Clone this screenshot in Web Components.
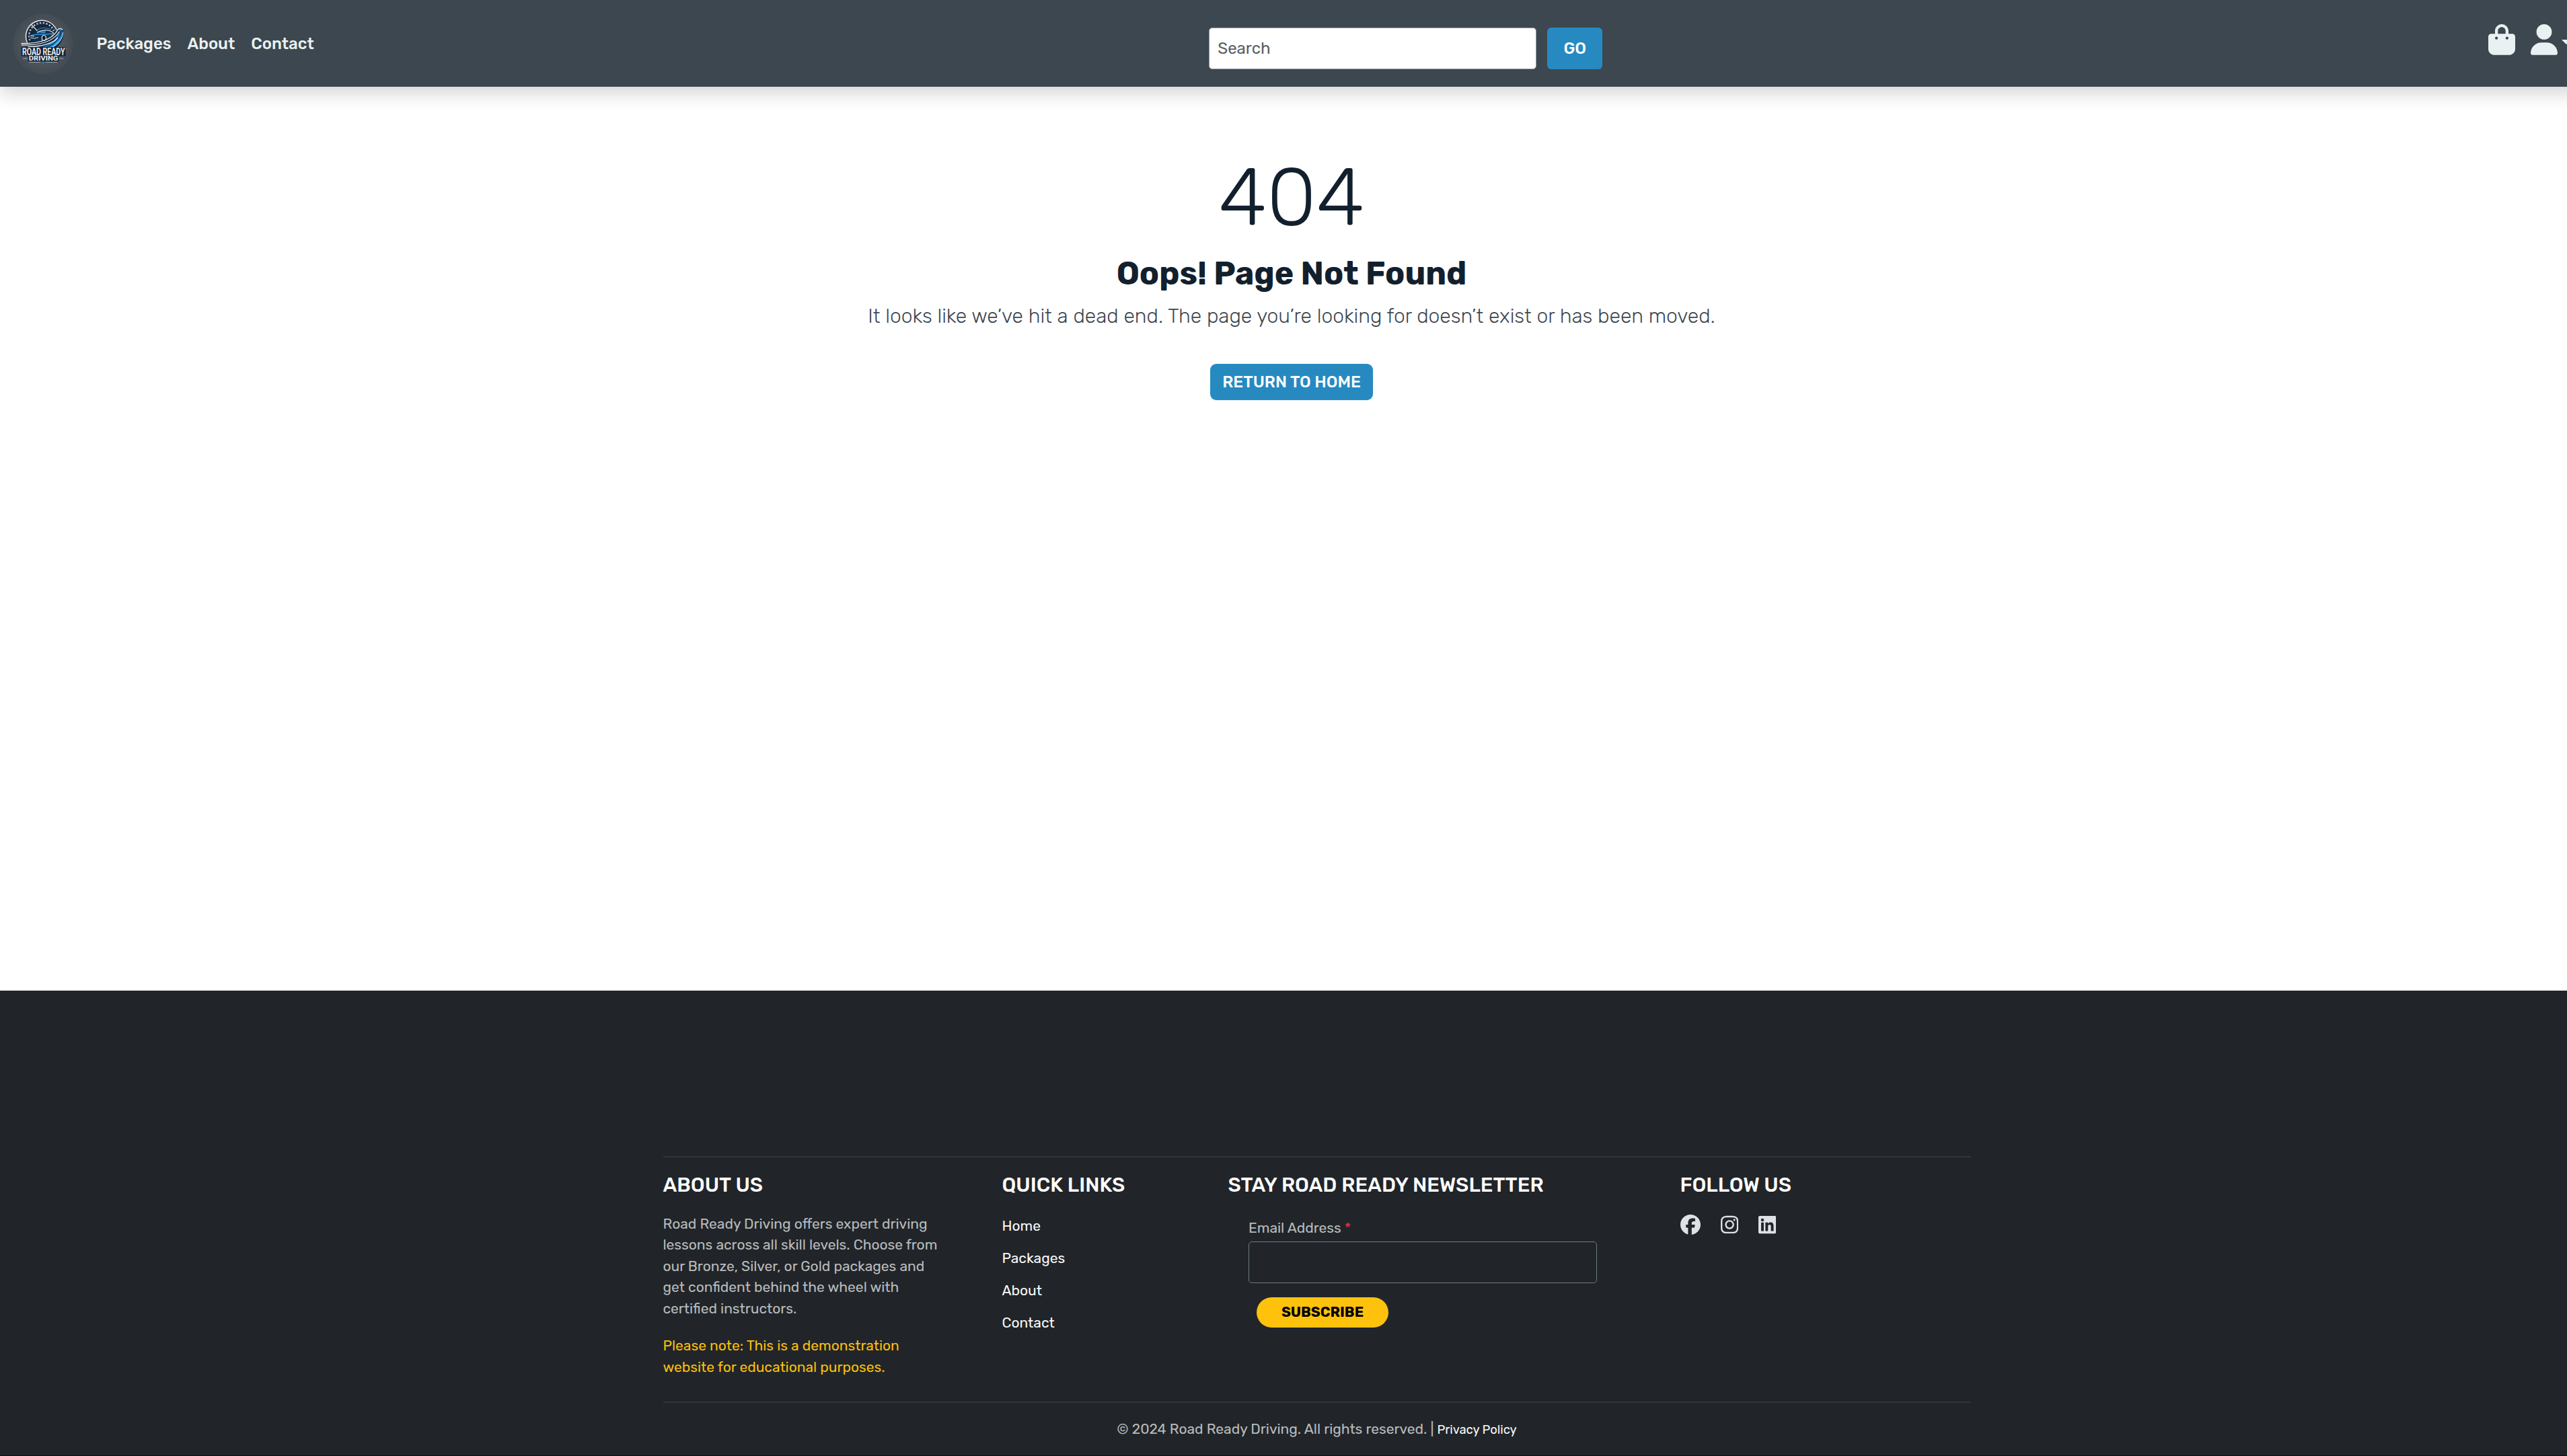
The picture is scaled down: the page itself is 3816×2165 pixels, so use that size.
<!DOCTYPE html>
<html lang="en">
<head>
<meta charset="utf-8">
<title>Road Ready Driving</title>
<style>
html,body{margin:0;padding:0}
html{background:#fff;overflow:hidden}
body{width:3840px;height:2165px;display:flex;flex-direction:column;font-family:Rubik,Roboto,sans-serif;font-size:24px;line-height:36px;color:#12202e}
</style>
</head>
<body>
<rr-navbar>
  <rr-logo slot="brand"></rr-logo>
  <rr-nav-link>Packages</rr-nav-link>
  <rr-nav-link>About</rr-nav-link>
  <rr-nav-link>Contact</rr-nav-link>
</rr-navbar>
<rr-not-found>
  <span slot="code">404</span>
  <span slot="title">Oops! Page Not Found</span>
  <span slot="lead">It looks like we’ve hit a dead end. The page you’re looking for doesn’t exist or has been moved.</span>
  <rr-button style="--pad:9px 18px;--radius:9px">RETURN TO HOME</rr-button>
</rr-not-found>
<rr-footer></rr-footer>
<script>
const define = (name, html) => customElements.define(name, class extends HTMLElement {
  constructor() {
    super();
    const t = document.createElement('template');
    t.innerHTML = html;
    this.attachShadow({mode: 'open'}).append(t.content.cloneNode(true));
  }
});

define('rr-logo', `
<style>:host{display:block;width:90px;height:90px}svg{display:block;overflow:visible}text{font-family:"Roboto","Liberation Sans",sans-serif}</style>
<svg width="90" height="90" viewBox="18 20 90 90">
  <defs>
    <radialGradient id="g"><stop offset="0" stop-color="#5e6167"/><stop offset=".6" stop-color="#51565c"/><stop offset="1" stop-color="#424b53"/></radialGradient>
    <linearGradient id="b" x1="0" x2="1" y1="1" y2="0"><stop offset="0" stop-color="#1673c4"/><stop offset=".5" stop-color="#2aa0ea"/><stop offset="1" stop-color="#15588f"/></linearGradient>
  </defs>
  <circle cx="63" cy="65" r="45" fill="url(#g)"/>
  <path d="M38.7 64A24 24 0 1 1 84.500 47L80 64L60 70Z" fill="#17263a"/>
  <path d="M39.500 63.500A23.400 23.400 0 1 1 83 44.500" fill="none" stroke="#e6ecef" stroke-width="1.5"/>
  <path d="M43.500 60A18.800 18.800 0 0 1 79 46" fill="none" stroke="#b4bec7" stroke-width="2.6" stroke-dasharray="2.2 2.6"/>
  <path d="M42 57A21 21 0 0 1 82 47" fill="none" stroke="#9fadb8" stroke-width="1" stroke-dasharray=".7 1.7"/>
  <path d="M46 37L54.5 46" stroke="#e6ecef" stroke-width="1.1"/>
  <path d="M54 44.5Q63 38.5 75 44" fill="none" stroke="#1f7fc4" stroke-width="1.4"/>
  <path d="M43 54Q45 49.5 53.5 48.5Q60 43.5 71 44.5Q76 45.5 79 49.5Q81.5 52 79 57L66 61L49 62L43.5 58Z" fill="#15304c"/>
  <path d="M54 48.5Q61 44.3 70 45Q76 46 79.5 50" fill="none" stroke="#dfe8ee" stroke-width="1.1"/>
  <path d="M55 48.6Q62 46 67 46.5L66 49Z" fill="#3c8fc8"/>
  <path d="M44 53Q57 50 68 51L78 50" fill="none" stroke="#2b94da" stroke-width="1.3"/>
  <path d="M44 56.2L51 57L56 55.5M44.5 53.5L50 54" fill="none" stroke="#d5e0e7" stroke-width="1"/>
  <ellipse cx="64.3" cy="56.5" rx="3" ry="4" fill="#0f1c2b" stroke="#e6ecef" stroke-width="1.2"/>
  <ellipse cx="77.5" cy="52" rx="1.2" ry="2.4" fill="#0f1c2b" stroke="#b8c6d0" stroke-width=".7"/>
  <path d="M30 69Q74 66 85.500 43Q91 40 93 45Q96 58 84 70Z" fill="#152a40"/>
  <path d="M61 70.500Q83 65 87.500 43.500Q91.500 42 92.500 46Q94 61 78 70.500Z" fill="url(#b)"/>
  <path d="M69 70Q87 63 90 46" fill="none" stroke="#122236" stroke-width="1.3"/>
  <path d="M76 70.500Q92 62 92.800 48" fill="none" stroke="#dce8ef" stroke-width=".9"/>
  <path d="M30.500 64.800Q74 65 85 44Q88.500 41 92 44" fill="none" stroke="#eef3f5" stroke-width="1.4"/>
  <path d="M31 67.200Q76 67.500 87 47" fill="none" stroke="#dce3e8" stroke-width="1.2"/>
  <path d="M40 69.500Q74 69 85 56" fill="none" stroke="#eef3f5" stroke-width="1.2"/>
  <path d="M30.500 70H96.500V83.500H86.500V91.500H40.500V83.500H30.500Z" fill="#14253a"/>
  <text x="32" y="82.3" font-size="15.2" font-weight="600" fill="#f1f4f6" textLength="63.5" lengthAdjust="spacingAndGlyphs">ROAD READY</text>
  <text x="41.8" y="90" font-size="8.4" font-weight="700" fill="#eef2f4" textLength="43.5" lengthAdjust="spacingAndGlyphs">DRIVING</text>
  <path d="M33 87H40M87 87H93.500M42 92.600H59M67 92.600H84.500" stroke="#a9b1b8" stroke-width=".9"/>
  <path d="M63.300 91L65 93L63.300 95L61.600 93Z" fill="#2b7fba"/>
  <circle cx="98" cy="72.3" r=".7" fill="#8d969e"/>
</svg>`);

define('rr-nav-link', `
<style>:host{display:block;font-weight:500;color:#eaf1f3}a{color:inherit;text-decoration:none}</style>
<a><slot></slot></a>`);

define('rr-button', `
<style>:host{display:inline-block;box-sizing:border-box;padding:var(--pad,13px 24px);border-radius:var(--radius,6px);background:#268ac1;color:#fff;font-weight:500;white-space:nowrap;text-align:center}</style>
<slot></slot>`);

define('rr-search', `
<style>:host{display:flex;gap:16px}
.field{box-sizing:border-box;width:487px;height:62px;padding:12px;border:1px solid #8d99a3;border-radius:5px;background:#fff;color:#595f64}
rr-button{width:82px;--pad:13px 0}</style>
<div class="field">Search</div><rr-button>GO</rr-button>`);

define('rr-navbar', `
<style>
:host{display:flex;align-items:center;box-sizing:border-box;width:3840px;height:129px;flex:none;padding:0 18px 0 18.5px;background:#3d474f;box-shadow:0 12px 24px rgba(0,0,0,.15);justify-content:space-between}
.left{display:flex;align-items:center;gap:35px}
.links{display:flex;gap:24px}
rr-search{padding-top:15px;margin-left:1330.5px;margin-right:auto}
.actions{display:flex;align-items:center;gap:23px;color:#eaf1f3;padding-bottom:11px}
.user{display:flex;align-items:center;gap:6px}
svg{display:block}
.caret{border:7.2px solid transparent;border-top-color:#eaf1f3;border-bottom:0;margin-top:7px}
</style>
<div class="left"><slot name="brand"></slot><div class="links"><slot></slot></div></div>
<rr-search></rr-search>
<div class="actions">
  <svg width="40" height="45.7" viewBox="0 0 448 512" fill="currentColor"><path d="M160 112c0-35.3 28.7-64 64-64s64 28.7 64 64v48H160V112zm-48 48H48c-26.500 0-48 21.500-48 48V416c0 53 43 96 96 96H352c53 0 96-43 96-96V208c0-26.500-21.500-48-48-48H336V112C336 50.100 285.900 0 224 0S112 50.100 112 112v48zm24 48a24 24 0 1 1 0 48 24 24 0 1 1 0-48zm152 24a24 24 0 1 1 48 0 24 24 0 1 1 -48 0z"/></svg>
  <div class="user">
  <svg width="40" height="45.7" viewBox="0 0 448 512" fill="currentColor"><path d="M224 256A128 128 0 1 0 224 0a128 128 0 1 0 0 256zm-45.700 48C79.800 304 0 383.800 0 482.300C0 498.700 13.300 512 29.700 512H418.300c16.400 0 29.700-13.300 29.700-29.700C448 383.800 368.200 304 269.700 304H178.300z"/></svg>
  <div class="caret"></div></div>
</div>`);

define('rr-not-found', `
<style>
:host{display:flex;flex-direction:column;align-items:center;flex:1;padding-top:93px;text-align:center}
h1,h2,p{margin:0}
h1{font-size:120px;line-height:144px;font-weight:300}
h2{font-size:48px;line-height:57.6px;font-weight:700;margin:12px 0}
p{font-size:30px;line-height:45px;font-weight:300;color:#3d474f;margin-bottom:48px}
</style>
<h1><slot name="code"></slot></h1><h2><slot name="title"></slot></h2><p><slot name="lead"></slot></p><slot></slot>`);

define('rr-footer-column', `
<style>:host{display:block}h5{margin:0 0 24px;font-size:30px;line-height:36px;font-weight:500;color:#fff;white-space:nowrap}</style>
<h5><slot name="heading"></slot></h5><slot></slot>`);

define('rr-subscribe', `
<style>
:host{display:flex;flex-direction:column;align-items:flex-start;padding:6px 0 0 30.5px;font-size:21px;line-height:31.5px;color:rgba(255,255,255,.7)}
i{font-style:normal;color:#dc3545}
.input{box-sizing:border-box;width:518px;height:62px;margin-top:4.5px;border:1px solid #6c7a84;border-radius:5px}
.btn{box-sizing:border-box;width:196px;margin:21px 0 0 12px;padding:6.75px 0;text-align:center;border-radius:23px;background:#ffc20c;color:#000;font-weight:700}
</style>
<label>Email Address <i>*</i></label><div class="input"></div><div class="btn">SUBSCRIBE</div>`);

define('rr-social', `
<style>:host{display:flex;align-items:center;gap:30px;height:34px;color:#dee2e6}svg{display:block}</style>
<svg width="30" height="30" viewBox="0 0 512 512" fill="currentColor"><path d="M512 256C512 114.600 397.400 0 256 0S0 114.600 0 256C0 376 82.700 476.800 194.200 504.500V334.200H141.400V256h52.800V222.300c0-87.100 39.400-127.500 125-127.500c16.200 0 44.200 3.200 55.700 6.400V172c-6-.6-16.500-1-29.600-1c-42 0-58.200 15.900-58.200 57.200V256h83.600l-14.400 78.200H287V510.100C413.800 494.800 512 386.900 512 256h0z"/></svg>
<svg width="26.25" height="30" viewBox="0 0 448 512" fill="currentColor"><path d="M224.100 141c-63.600 0-114.900 51.300-114.900 114.900s51.300 114.900 114.900 114.900S339 319.500 339 255.900 287.700 141 224.100 141zm0 189.600c-41.100 0-74.700-33.500-74.700-74.700s33.500-74.700 74.700-74.700 74.700 33.500 74.700 74.700-33.600 74.700-74.700 74.700zm146.400-194.300c0 14.900-12 26.800-26.800 26.800-14.900 0-26.800-12-26.800-26.800s12-26.800 26.800-26.800 26.800 12 26.800 26.800zm76.100 27.200c-1.700-35.900-9.900-67.700-36.200-93.900-26.200-26.200-58-34.400-93.900-36.200-37-2.100-147.900-2.100-184.900 0-35.800 1.700-67.600 9.900-93.900 36.100s-34.400 58-36.200 93.900c-2.100 37-2.100 147.900 0 184.900 1.700 35.900 9.900 67.700 36.200 93.900s58 34.400 93.900 36.200c37 2.100 147.900 2.100 184.900 0 35.900-1.700 67.700-9.900 93.900-36.200 26.200-26.200 34.400-58 36.200-93.900 2.100-37 2.100-147.800 0-184.800zM398.800 388c-7.800 19.600-22.900 34.700-42.600 42.600-29.500 11.700-99.500 9-132.100 9s-102.700 2.600-132.100-9c-19.600-7.800-34.700-22.900-42.600-42.600-11.700-29.500-9-99.500-9-132.100s-2.600-102.700 9-132.100c7.800-19.600 22.900-34.700 42.600-42.600 29.500-11.700 99.500-9 132.100-9s102.700-2.600 132.100 9c19.600 7.800 34.700 22.900 42.600 42.600 11.700 29.500 9 99.500 9 132.100s2.700 102.700-9 132.100z"/></svg>
<svg width="26.25" height="30" viewBox="0 0 448 512" fill="currentColor"><path d="M416 32H31.900C14.300 32 0 46.500 0 64.300v383.400C0 465.500 14.300 480 31.900 480H416c17.600 0 32-14.500 32-32.300V64.300c0-17.800-14.400-32.300-32-32.300zM135.400 416H69V202.200h66.500V416zm-33.200-243c-21.300 0-38.500-17.300-38.500-38.500S80.900 96 102.200 96c21.200 0 38.500 17.300 38.500 38.500 0 21.300-17.200 38.500-38.500 38.500zm282.100 243h-66.400V312c0-24.800-.5-56.700-34.500-56.700-34.600 0-39.900 27-39.900 54.900V416h-66.400V202.200h63.700v29.200h.9c8.900-16.800 30.600-34.500 62.900-34.500 67.200 0 79.700 44.300 79.700 101.900V416z"/></svg>`);

define('rr-footer', `
<style>
:host{display:block;box-sizing:border-box;flex:none;height:692px;padding:246px 0 0 985.5px;background:#212529;border-bottom:1px solid #0c0e10}
.inner{width:1944px}
hr{margin:0;border:0;height:1.5px;background:#31363b}
.cols{display:grid;grid-template-columns:504px 336px 672px 432px;height:340.5px;margin:23px 0 0}
p{margin:0 0 24px;width:412px;font-size:21px;line-height:31.5px;color:rgba(255,255,255,.7)}
p.note{color:#fcbf0b;margin:0}
ul{list-style:none;margin:0;padding:0;display:flex;flex-direction:column;gap:12px}
li{height:36px}
a{color:#f8f9fa;font-size:21px;text-decoration:none}
.copy{margin-top:23.5px;text-align:center;font-size:21px;line-height:31.5px;color:rgba(255,255,255,.7)}
.copy a{font-size:18.375px}
</style>
<div class="inner">
<hr>
<div class="cols">
  <rr-footer-column><span slot="heading">ABOUT US</span>
    <p>Road Ready Driving offers expert driving lessons across all skill levels. Choose from our Bronze, Silver, or Gold packages and get confident behind the wheel with certified instructors.</p>
    <p class="note">Please note: This is a demonstration website for educational purposes.</p>
  </rr-footer-column>
  <rr-footer-column><span slot="heading">QUICK LINKS</span>
    <ul><li><a>Home</a></li><li><a>Packages</a></li><li><a>About</a></li><li><a>Contact</a></li></ul>
  </rr-footer-column>
  <rr-footer-column><span slot="heading">STAY ROAD READY NEWSLETTER</span><rr-subscribe></rr-subscribe></rr-footer-column>
  <rr-footer-column><span slot="heading">FOLLOW US</span><rr-social></rr-social></rr-footer-column>
</div>
<hr>
<div class="copy">© 2024 Road Ready Driving. All rights reserved. | <a>Privacy Policy</a></div>
</div>`);
</script>
</body>
</html>
